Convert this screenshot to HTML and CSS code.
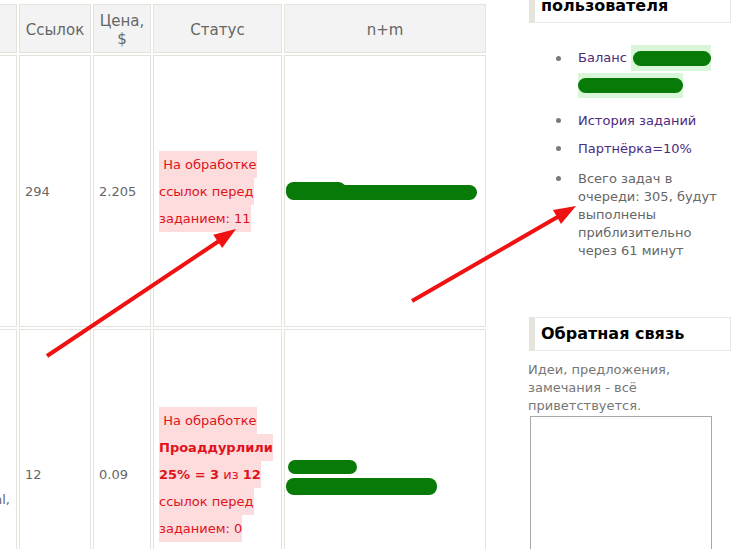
FILE: index.html
```html
<!DOCTYPE html>
<html lang="ru">
<head>
<meta charset="utf-8">
<title>Задания</title>
<link rel="stylesheet" href="styles.css">
</head>
<body>
<div class="page">
  <div class="main">
    <table class="grid">
      <colgroup>
        <col class="c0"><col class="c1"><col class="c2"><col class="c3"><col class="c4">
      </colgroup>
      <thead>
        <tr class="head">
          <th></th>
          <th>Ссылок</th>
          <th>Цена,<br>$</th>
          <th>Статус</th>
          <th>n+m</th>
        </tr>
      </thead>
      <tbody>
        <tr class="r1">
          <td class="first"></td>
          <td class="num">294</td>
          <td class="num">2.205</td>
          <td class="status"><span class="hl">&nbsp;На обработке ссылок перед заданием: 11</span></td>
          <td class="nm">
            <div class="blob b1"><span class="b1a"></span></div>
          </td>
        </tr>
        <tr class="r2">
          <td class="first"><div class="frag">page.html,</div><div class="frag frag2">о</div></td>
          <td class="num">12</td>
          <td class="num">0.09</td>
          <td class="status"><span class="hl">&nbsp;На обработке <b>Проаддурлили 25% = 3</b> из <b>12</b> ссылок перед заданием: 0</span></td>
          <td class="nm">
            <div class="blob b2"></div>
            <div class="blob b3"></div>
          </td>
        </tr>
      </tbody>
    </table>
  </div>

  <aside class="side">
    <div class="box-title top">пользователя</div>
    <ul class="menu">
      <li><a href="#">Баланс</a> <span class="cover c-a"><span class="ink"></span></span> <span class="cover c-b"><span class="ink"></span></span></li>
      <li><a href="#">История заданий</a></li>
      <li><a href="#">Партнёрка=10%</a></li>
      <li>Всего задач в очереди: 305, будут выполнены приблизительно через 61 минут</li>
    </ul>

    <div class="box-title fb">Обратная связь</div>
    <p class="hint">Идеи, предложения, замечания - всё приветствуется.</p>
    <textarea class="msg"></textarea>
  </aside>
</div>

<svg class="arrows" width="736" height="549" viewBox="0 0 736 549">
  <line x1="47" y1="356" x2="222" y2="239" stroke="#f01212" stroke-width="4"/>
  <polygon points="236,229 222.2,247.9 213.2,234.7" fill="#f01212"/>
  <line x1="412" y1="301" x2="561" y2="215" stroke="#f01212" stroke-width="4"/>
  <polygon points="576,206 561,224 553,210" fill="#f01212"/>
</svg>
</body>
</html>
```
FILE: styles.css
```css
html, body {
  margin: 0;
  padding: 0;
  background: #fff;
  overflow: hidden;
}
body {
  font-family: "DejaVu Sans", Verdana, sans-serif;
  font-size: 13px;
  color: #666;
  width: 736px;
  height: 549px;
  position: relative;
}
.page {
  display: flex;
  align-items: flex-start;
}
.main {
  margin-left: -85px;
  padding-top: 3px;
  flex: none;
}
.grid {
  border-collapse: separate;
  border-spacing: 2px;
  table-layout: fixed;
  width: 573px;
  margin-top: -1px;
}
.c0 { width: 100px; }
.c1 { width: 72px; }
.c2 { width: 58px; }
.c3 { width: 129px; }
.c4 { width: 202px; }
.grid th, .grid td {
  border: 1px solid #e4e3da;
  box-sizing: border-box;
}
.grid th {
  background: #f3f3f3;
  font-weight: normal;
  font-size: 15px;
  line-height: 18px;
  color: #666;
  padding: 2px 2px 0;
}
.head { height: 49px; }
.r1 { height: 272px; }
.r2 { height: 290px; }
.grid td {
  vertical-align: middle;
  padding: 0 5px;
}
.num { color: #666; }
.first {
  vertical-align: top !important;
  text-align: right;
  padding-right: 6px !important;
}
.frag {
  margin-top: 161px;
  line-height: 18px;
}
.frag2 { margin-top: 34px; }
.status {
  line-height: 27px;
  padding-left: 5px !important;
  padding-right: 2px !important;
}
.hl {
  background: #fcdcdc;
  color: #e0121c;
  padding: 6px 0;
}
.hl b { font-weight: bold; }
.nm { padding: 0 1px !important; }
.blob {
  background: #087a08;
  border-radius: 8px;
}
.b1 {
  width: 191px;
  height: 15px;
  margin-top: 3px;
  position: relative;
}
.b1a {
  position: absolute;
  left: 0;
  top: -3px;
  width: 60px;
  height: 15px;
  background: #087a08;
  border-radius: 8px;
}
.b2 { width: 69px; height: 14px; margin: 6px 0 0 2px; border-radius: 7px; }
.b3 { width: 151px; height: 17px; margin-top: 4px; border-radius: 8px; }

.side {
  flex: none;
  width: 202px;
  margin-left: 41px;
}
.box-title {
  border: 1px solid #e8e8e8;
  border-left: 6px solid #e4e4dc;
  padding: 7px 6px;
  font-family: "DejaVu Sans", Verdana, sans-serif;
  font-weight: bold;
  font-size: 16px;
  line-height: 18px;
  color: #000;
}
.box-title.top { margin-top: -11px; }
.menu {
  margin: 22px 0 0;
  padding-left: 49px;
  line-height: 18px;
  color: #666;
  list-style: none;
}
.menu li {
  margin-bottom: 12px;
  position: relative;
}
.menu li:nth-child(2) { margin-top: 14px; margin-bottom: 10px; }
.menu li::before {
  content: "";
  position: absolute;
  left: -22px;
  top: 6px;
  width: 5px;
  height: 5px;
  border-radius: 50%;
  background: #7a7a7a;
}
.menu li:first-child::before { top: 11px; }
.menu a {
  color: #4c2a7e;
  text-decoration: none;
}
.cover {
  display: inline-block;
  vertical-align: middle;
  background: #d9f6d9;
}
.c-a { width: 80px; height: 26px; }
.c-b { width: 105px; height: 25px; margin-top: 2px; }
.ink {
  display: block;
  background: #087a08;
  border-radius: 8px;
}
.c-a .ink { margin: 6px 0 0 2px; height: 15px; width: 78px; }
.c-b .ink { margin: 5px 0 0 0; height: 15px; width: 105px; }
.fb { margin-top: 57px; }
.hint {
  margin: 10px 0 0 -1px;
  line-height: 18px;
  color: #777;
}
.msg {
  display: block;
  margin: 1px 0 0 1px;
  width: 182px;
  height: 160px;
  box-sizing: border-box;
  border: 1px solid #a8a8a8;
  resize: none;
  padding: 0;
}
.arrows {
  position: absolute;
  top: 0;
  left: 0;
  pointer-events: none;
}
```
